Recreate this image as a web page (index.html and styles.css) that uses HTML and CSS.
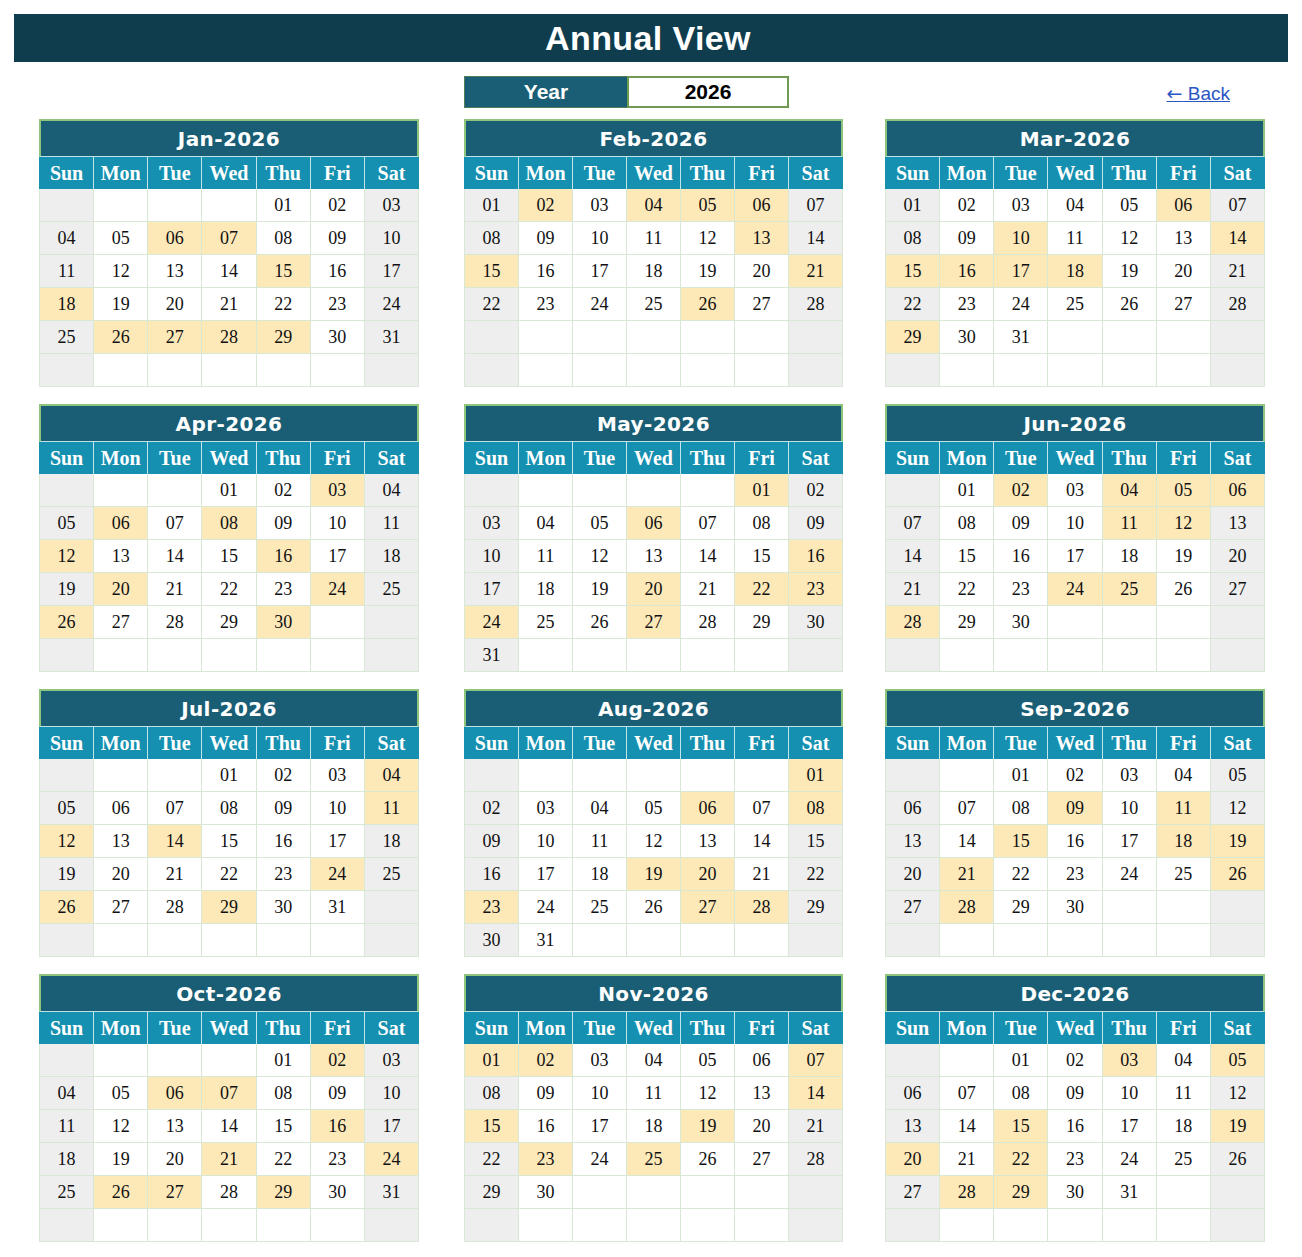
FILE: index.html
```html
<!DOCTYPE html>
<html lang="en">
<head>
<meta charset="utf-8">
<title>Annual View</title>
<link rel="stylesheet" href="styles.css">
</head>
<body>
<header class="banner">Annual View</header>
<div class="toolbar">
  <div class="yearbox"><span class="year-label">Year</span><span class="year-value">2026</span></div>
  <a class="back" href="#"><span class="arrow">←</span> Back</a>
</div>
<main class="grid">

<section class="month">
<h2 class="mtitle">Jan-2026</h2>
<div class="wk"><span>Sun</span><span>Mon</span><span>Tue</span><span>Wed</span><span>Thu</span><span>Fri</span><span>Sat</span></div>
<div class="cells">
<span class="we"></span><span></span><span></span><span></span><span>01</span><span>02</span><span class="we">03</span>
<span class="we">04</span><span>05</span><span class="hl">06</span><span class="hl">07</span><span>08</span><span>09</span><span class="we">10</span>
<span class="we">11</span><span>12</span><span>13</span><span>14</span><span class="hl">15</span><span>16</span><span class="we">17</span>
<span class="hl">18</span><span>19</span><span>20</span><span>21</span><span>22</span><span>23</span><span class="we">24</span>
<span class="we">25</span><span class="hl">26</span><span class="hl">27</span><span class="hl">28</span><span class="hl">29</span><span>30</span><span class="we">31</span>
<span class="we"></span><span></span><span></span><span></span><span></span><span></span><span class="we"></span>
</div>
</section>

<section class="month mid">
<h2 class="mtitle">Feb-2026</h2>
<div class="wk"><span>Sun</span><span>Mon</span><span>Tue</span><span>Wed</span><span>Thu</span><span>Fri</span><span>Sat</span></div>
<div class="cells">
<span class="we">01</span><span class="hl">02</span><span>03</span><span class="hl">04</span><span class="hl">05</span><span class="hl">06</span><span class="we">07</span>
<span class="we">08</span><span>09</span><span>10</span><span>11</span><span>12</span><span class="hl">13</span><span class="we">14</span>
<span class="hl">15</span><span>16</span><span>17</span><span>18</span><span>19</span><span>20</span><span class="hl">21</span>
<span class="we">22</span><span>23</span><span>24</span><span>25</span><span class="hl">26</span><span>27</span><span class="we">28</span>
<span class="we"></span><span></span><span></span><span></span><span></span><span></span><span class="we"></span>
<span class="we"></span><span></span><span></span><span></span><span></span><span></span><span class="we"></span>
</div>
</section>

<section class="month">
<h2 class="mtitle">Mar-2026</h2>
<div class="wk"><span>Sun</span><span>Mon</span><span>Tue</span><span>Wed</span><span>Thu</span><span>Fri</span><span>Sat</span></div>
<div class="cells">
<span class="we">01</span><span>02</span><span>03</span><span>04</span><span>05</span><span class="hl">06</span><span class="we">07</span>
<span class="we">08</span><span>09</span><span class="hl">10</span><span>11</span><span>12</span><span>13</span><span class="hl">14</span>
<span class="hl">15</span><span class="hl">16</span><span class="hl">17</span><span class="hl">18</span><span>19</span><span>20</span><span class="we">21</span>
<span class="we">22</span><span>23</span><span>24</span><span>25</span><span>26</span><span>27</span><span class="we">28</span>
<span class="hl">29</span><span>30</span><span>31</span><span></span><span></span><span></span><span class="we"></span>
<span class="we"></span><span></span><span></span><span></span><span></span><span></span><span class="we"></span>
</div>
</section>

<section class="month">
<h2 class="mtitle">Apr-2026</h2>
<div class="wk"><span>Sun</span><span>Mon</span><span>Tue</span><span>Wed</span><span>Thu</span><span>Fri</span><span>Sat</span></div>
<div class="cells">
<span class="we"></span><span></span><span></span><span>01</span><span>02</span><span class="hl">03</span><span class="we">04</span>
<span class="we">05</span><span class="hl">06</span><span>07</span><span class="hl">08</span><span>09</span><span>10</span><span class="we">11</span>
<span class="hl">12</span><span>13</span><span>14</span><span>15</span><span class="hl">16</span><span>17</span><span class="we">18</span>
<span class="we">19</span><span class="hl">20</span><span>21</span><span>22</span><span>23</span><span class="hl">24</span><span class="we">25</span>
<span class="hl">26</span><span>27</span><span>28</span><span>29</span><span class="hl">30</span><span></span><span class="we"></span>
<span class="we"></span><span></span><span></span><span></span><span></span><span></span><span class="we"></span>
</div>
</section>

<section class="month mid">
<h2 class="mtitle">May-2026</h2>
<div class="wk"><span>Sun</span><span>Mon</span><span>Tue</span><span>Wed</span><span>Thu</span><span>Fri</span><span>Sat</span></div>
<div class="cells">
<span class="we"></span><span></span><span></span><span></span><span></span><span class="hl">01</span><span class="we">02</span>
<span class="we">03</span><span>04</span><span>05</span><span class="hl">06</span><span>07</span><span>08</span><span class="we">09</span>
<span class="we">10</span><span>11</span><span>12</span><span>13</span><span>14</span><span>15</span><span class="hl">16</span>
<span class="we">17</span><span>18</span><span>19</span><span class="hl">20</span><span>21</span><span class="hl">22</span><span class="hl">23</span>
<span class="hl">24</span><span>25</span><span>26</span><span class="hl">27</span><span>28</span><span>29</span><span class="we">30</span>
<span class="we">31</span><span></span><span></span><span></span><span></span><span></span><span class="we"></span>
</div>
</section>

<section class="month">
<h2 class="mtitle">Jun-2026</h2>
<div class="wk"><span>Sun</span><span>Mon</span><span>Tue</span><span>Wed</span><span>Thu</span><span>Fri</span><span>Sat</span></div>
<div class="cells">
<span class="we"></span><span>01</span><span class="hl">02</span><span>03</span><span class="hl">04</span><span class="hl">05</span><span class="hl">06</span>
<span class="we">07</span><span>08</span><span>09</span><span>10</span><span class="hl">11</span><span class="hl">12</span><span class="we">13</span>
<span class="we">14</span><span>15</span><span>16</span><span>17</span><span>18</span><span>19</span><span class="we">20</span>
<span class="we">21</span><span>22</span><span>23</span><span class="hl">24</span><span class="hl">25</span><span>26</span><span class="we">27</span>
<span class="hl">28</span><span>29</span><span>30</span><span></span><span></span><span></span><span class="we"></span>
<span class="we"></span><span></span><span></span><span></span><span></span><span></span><span class="we"></span>
</div>
</section>

<section class="month">
<h2 class="mtitle">Jul-2026</h2>
<div class="wk"><span>Sun</span><span>Mon</span><span>Tue</span><span>Wed</span><span>Thu</span><span>Fri</span><span>Sat</span></div>
<div class="cells">
<span class="we"></span><span></span><span></span><span>01</span><span>02</span><span>03</span><span class="hl">04</span>
<span class="we">05</span><span>06</span><span>07</span><span>08</span><span>09</span><span>10</span><span class="hl">11</span>
<span class="hl">12</span><span>13</span><span class="hl">14</span><span>15</span><span>16</span><span>17</span><span class="we">18</span>
<span class="we">19</span><span>20</span><span>21</span><span>22</span><span>23</span><span class="hl">24</span><span class="we">25</span>
<span class="hl">26</span><span>27</span><span>28</span><span class="hl">29</span><span>30</span><span>31</span><span class="we"></span>
<span class="we"></span><span></span><span></span><span></span><span></span><span></span><span class="we"></span>
</div>
</section>

<section class="month mid">
<h2 class="mtitle">Aug-2026</h2>
<div class="wk"><span>Sun</span><span>Mon</span><span>Tue</span><span>Wed</span><span>Thu</span><span>Fri</span><span>Sat</span></div>
<div class="cells">
<span class="we"></span><span></span><span></span><span></span><span></span><span></span><span class="hl">01</span>
<span class="we">02</span><span>03</span><span>04</span><span>05</span><span class="hl">06</span><span>07</span><span class="hl">08</span>
<span class="we">09</span><span>10</span><span>11</span><span>12</span><span>13</span><span>14</span><span class="we">15</span>
<span class="we">16</span><span>17</span><span>18</span><span class="hl">19</span><span class="hl">20</span><span>21</span><span class="we">22</span>
<span class="hl">23</span><span>24</span><span>25</span><span>26</span><span class="hl">27</span><span class="hl">28</span><span class="we">29</span>
<span class="we">30</span><span>31</span><span></span><span></span><span></span><span></span><span class="we"></span>
</div>
</section>

<section class="month">
<h2 class="mtitle">Sep-2026</h2>
<div class="wk"><span>Sun</span><span>Mon</span><span>Tue</span><span>Wed</span><span>Thu</span><span>Fri</span><span>Sat</span></div>
<div class="cells">
<span class="we"></span><span></span><span>01</span><span>02</span><span>03</span><span>04</span><span class="we">05</span>
<span class="we">06</span><span>07</span><span>08</span><span class="hl">09</span><span>10</span><span class="hl">11</span><span class="we">12</span>
<span class="we">13</span><span>14</span><span class="hl">15</span><span>16</span><span>17</span><span class="hl">18</span><span class="hl">19</span>
<span class="we">20</span><span class="hl">21</span><span>22</span><span>23</span><span>24</span><span>25</span><span class="hl">26</span>
<span class="we">27</span><span class="hl">28</span><span>29</span><span>30</span><span></span><span></span><span class="we"></span>
<span class="we"></span><span></span><span></span><span></span><span></span><span></span><span class="we"></span>
</div>
</section>

<section class="month">
<h2 class="mtitle">Oct-2026</h2>
<div class="wk"><span>Sun</span><span>Mon</span><span>Tue</span><span>Wed</span><span>Thu</span><span>Fri</span><span>Sat</span></div>
<div class="cells">
<span class="we"></span><span></span><span></span><span></span><span>01</span><span class="hl">02</span><span class="we">03</span>
<span class="we">04</span><span>05</span><span class="hl">06</span><span class="hl">07</span><span>08</span><span>09</span><span class="we">10</span>
<span class="we">11</span><span>12</span><span>13</span><span>14</span><span>15</span><span class="hl">16</span><span class="we">17</span>
<span class="we">18</span><span>19</span><span>20</span><span class="hl">21</span><span>22</span><span>23</span><span class="hl">24</span>
<span class="we">25</span><span class="hl">26</span><span class="hl">27</span><span>28</span><span class="hl">29</span><span>30</span><span class="we">31</span>
<span class="we"></span><span></span><span></span><span></span><span></span><span></span><span class="we"></span>
</div>
</section>

<section class="month mid">
<h2 class="mtitle">Nov-2026</h2>
<div class="wk"><span>Sun</span><span>Mon</span><span>Tue</span><span>Wed</span><span>Thu</span><span>Fri</span><span>Sat</span></div>
<div class="cells">
<span class="hl">01</span><span class="hl">02</span><span>03</span><span>04</span><span>05</span><span>06</span><span class="hl">07</span>
<span class="we">08</span><span>09</span><span>10</span><span>11</span><span>12</span><span>13</span><span class="hl">14</span>
<span class="hl">15</span><span>16</span><span>17</span><span>18</span><span class="hl">19</span><span>20</span><span class="we">21</span>
<span class="we">22</span><span class="hl">23</span><span>24</span><span class="hl">25</span><span>26</span><span>27</span><span class="we">28</span>
<span class="we">29</span><span>30</span><span></span><span></span><span></span><span></span><span class="we"></span>
<span class="we"></span><span></span><span></span><span></span><span></span><span></span><span class="we"></span>
</div>
</section>

<section class="month">
<h2 class="mtitle">Dec-2026</h2>
<div class="wk"><span>Sun</span><span>Mon</span><span>Tue</span><span>Wed</span><span>Thu</span><span>Fri</span><span>Sat</span></div>
<div class="cells">
<span class="we"></span><span></span><span>01</span><span>02</span><span class="hl">03</span><span>04</span><span class="hl">05</span>
<span class="we">06</span><span>07</span><span>08</span><span>09</span><span>10</span><span>11</span><span class="we">12</span>
<span class="we">13</span><span>14</span><span class="hl">15</span><span>16</span><span>17</span><span>18</span><span class="hl">19</span>
<span class="hl">20</span><span>21</span><span class="hl">22</span><span>23</span><span>24</span><span>25</span><span class="we">26</span>
<span class="we">27</span><span class="hl">28</span><span class="hl">29</span><span>30</span><span>31</span><span></span><span class="we"></span>
<span class="we"></span><span></span><span></span><span></span><span></span><span></span><span class="we"></span>
</div>
</section>

</main>
</body>
</html>
```
FILE: styles.css
```css
* { box-sizing: border-box; }

body {
  margin: 0;
  padding: 14px;
  background: #ffffff;
  font-family: "Liberation Sans", Arial, sans-serif;
}

.banner {
  height: 48px;
  background: #0f3d4e;
  color: #ffffff;
  font-size: 34px;
  font-weight: bold;
  line-height: 48px;
  text-align: center;
  letter-spacing: 0.4px;
  text-indent: -6px;
}

.toolbar {
  display: grid;
  grid-template-columns: 380px 380px 380px;
  column-gap: 43px;
  align-items: center;
  height: 32px;
  margin: 14px 0 11px 25px;
}

.yearbox {
  grid-column: 2;
  display: flex;
  width: 325px;
  height: 32px;
  margin-left: 2px;
}

.year-label {
  width: 163px;
  background: #1a5e75;
  color: #ffffff;
  border: 1px solid #4f7f5a;
  border-right: 0;
  font-size: 21px;
  font-weight: bold;
  line-height: 30px;
  text-align: center;
}

.year-value {
  flex: 1;
  background: #ffffff;
  color: #000000;
  border: 2px solid #6f9a52;
  font-size: 21px;
  font-weight: bold;
  line-height: 28px;
  text-align: center;
}

.back {
  grid-column: 3;
  justify-self: end;
  margin-right: 35px;
  margin-top: 2px;
  color: #2a56c4;
  font-size: 19px;
  text-decoration: underline;
}

.back .arrow {
  font-family: "DejaVu Sans", sans-serif;
  font-size: 19px;
}

.grid {
  display: grid;
  grid-template-columns: 380px 380px 380px;
  column-gap: 43px;
  row-gap: 17px;
  margin-left: 25px;
}

.month {
  display: flex;
  flex-direction: column;
}

.month.mid {
  margin-left: 2px;
  margin-right: -1px;
}

.mtitle {
  margin: 0;
  height: 38px;
  background: #1a5e75;
  border: 2px solid #8fc47d;
  border-bottom: 1px solid #bfe2e8;
  color: #ffffff;
  font-family: "DejaVu Sans", "Verdana", sans-serif;
  font-size: 20px;
  font-weight: bold;
  line-height: 36px;
  text-align: center;
  letter-spacing: 0.4px;
}

.wk {
  display: grid;
  grid-template-columns: repeat(7, 1fr);
  gap: 1px;
  height: 32px;
  background: #c4e4ea;
  border-left: 1px solid #1590b0;
  border-right: 1px solid #1590b0;
}

.wk span {
  background: #1590b0;
  color: #ffffff;
  font-family: "Liberation Serif", "Times New Roman", serif;
  font-size: 20px;
  font-weight: bold;
  line-height: 32px;
  text-align: center;
}

.cells {
  display: grid;
  grid-template-columns: repeat(7, 1fr);
  grid-auto-rows: 32px;
  gap: 1px;
  background: #d9e7d5;
  border: 1px solid #d9e7d5;
  border-top: 0;
}

.cells span {
  background: #ffffff;
  color: #111111;
  font-family: "Liberation Serif", "Times New Roman", serif;
  font-size: 18px;
  line-height: 32px;
  text-align: center;
}

.cells span.we {
  background: #eeeeee;
}

.cells span.hl {
  background: #fde8b8;
}
```
